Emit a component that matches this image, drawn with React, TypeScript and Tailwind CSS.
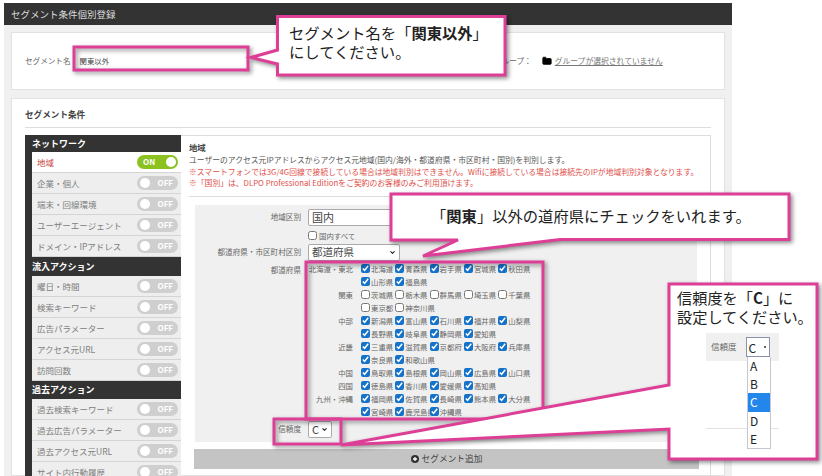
import { ChevronDown, Folder } from "lucide-react";

const PINK = "#dd3f96";

const SIDEBAR = [
  { title: "ネットワーク", h: "h-[17px]", items: ["地域", "企業・個人", "端末・回線環境", "ユーザーエージェント", "ドメイン・IPアドレス"] },
  { title: "流入アクション", h: "h-[19px]", items: ["曜日・時間", "検索キーワード", "広告パラメーター", "アクセス元URL", "訪問回数"] },
  { title: "過去アクション", h: "h-[18px]", items: ["過去検索キーワード", "過去広告パラメーター", "過去アクセス元URL", "サイト内行動履歴"] },
];

const REGIONS = [
  { label: "北海道・東北", on: true, names: ["北海道", "青森県", "岩手県", "宮城県", "秋田県", "山形県", "福島県"] },
  { label: "関東", on: false, names: ["茨城県", "栃木県", "群馬県", "埼玉県", "千葉県", "東京都", "神奈川県"] },
  { label: "中部", on: true, names: ["新潟県", "富山県", "石川県", "福井県", "山梨県", "長野県", "岐阜県", "静岡県", "愛知県"] },
  { label: "近畿", on: true, names: ["三重県", "滋賀県", "京都府", "大阪府", "兵庫県", "奈良県", "和歌山県"] },
  { label: "中国", on: true, names: ["鳥取県", "島根県", "岡山県", "広島県", "山口県"] },
  { label: "四国", on: true, names: ["徳島県", "香川県", "愛媛県", "高知県"] },
  { label: "九州・沖縄", on: true, names: ["福岡県", "佐賀県", "長崎県", "熊本県", "大分県", "宮崎県", "鹿児島県", "沖縄県"] },
];

const Toggle = ({ on }: { on: boolean }) =>
  on ? (
    <div className="flex h-[14px] w-[41px] items-center justify-between rounded-full bg-[#8cc220] pl-[6px] pr-[2px]">
      <span className="text-[8px] font-bold text-white">ON</span>
      <span className="h-[10px] w-[10px] rounded-full bg-white" />
    </div>
  ) : (
    <div className="flex h-[14px] w-[41px] items-center justify-between rounded-full bg-[#cfcfcf] pl-[3px] pr-[5px]">
      <span className="h-[10px] w-[10px] rounded-full bg-white" />
      <span className="text-[8px] font-bold text-white">OFF</span>
    </div>
  );

const Sidebar = () => (
  <div className="w-[156px] shrink-0 bg-[#333] pl-[7px]">
    {SIDEBAR.map((group) => (
      <div key={group.title}>
        <div className={`flex items-center text-[9px] font-bold text-white ${group.h}`}>{group.title}</div>
        {group.items.map((item) => {
          const active = item === "地域";
          return (
            <div
              key={item}
              className={`flex h-[21px] items-center justify-between border-b border-[#d4d4d4] pl-[5px] pr-[3px] text-[8.5px] ${
                active ? "bg-white text-[#c8413b]" : "bg-[#eeeeee] text-[#808080]"
              }`}
            >
              <span>{item}</span>
              <Toggle on={active} />
            </div>
          );
        })}
      </div>
    ))}
  </div>
);

const Prefecture = ({ name, on }: { name: string; on: boolean }) => (
  <label className="flex h-[13px] items-center whitespace-nowrap text-[7.4px] text-[#666]">
    <input type="checkbox" defaultChecked={on} className="mr-[1px] h-[9px] w-[9px] accent-[#1473c9]" />
    {name}
  </label>
);

const FormRow = ({ label, children }: { label: string; children: React.ReactNode }) => (
  <div className="flex">
    <div className="w-[106px] shrink-0 whitespace-nowrap pt-[2px] text-right text-[7.6px] text-[#666]">{label}</div>
    <div className="ml-[7px] flex flex-col">{children}</div>
  </div>
);

const Select = ({ value, width, text }: { value: string; width: string; text: string }) => (
  <div className={`flex h-[17px] items-center justify-between rounded-[2px] border border-[#aaa] bg-white pl-[3px] pr-[3px] text-[#444] ${width} ${text}`}>
    {value}
    <ChevronDown strokeWidth={3.5} className="h-[7px] w-[7px] text-[#222]" />
  </div>
);

const RegionPanel = () => (
  <div className="ml-[14px] h-[237px] w-[502px] bg-[#f0f0f0] pt-[4px]">
    <FormRow label="地域区別">
      <Select value="国内" width="w-[120px]" text="text-[11px]" />
    </FormRow>
    <div className="ml-[113px] mt-[3px] flex h-[13px] items-center text-[7.4px] text-[#666]">
      <input type="checkbox" className="mr-[2px] h-[9px] w-[9px]" />
      国内すべて
    </div>
    <div className="mt-[2px]">
      <FormRow label="都道府県・市区町村区別">
        <Select value="都道府県" width="w-[92px]" text="text-[10.5px]" />
      </FormRow>
    </div>
    <div className="mt-[1px]">
      <FormRow label="都道府県">
        {REGIONS.map((region) => (
          <div key={region.label} className="flex">
            <div className="flex h-[13px] w-[45px] items-center justify-end whitespace-nowrap text-[7.4px] text-[#666]">{region.label}</div>
            <div className="ml-[8px] grid w-[172px] grid-cols-[repeat(5,34.3px)]">
              {region.names.map((name) => (
                <Prefecture key={name} name={name} on={region.on} />
              ))}
            </div>
          </div>
        ))}
      </FormRow>
    </div>
    <div className="mt-[3px]">
      <FormRow label="信頼度">
        <Select value="C" width="w-[24px]" text="text-[11px]" />
      </FormRow>
    </div>
  </div>
);

const Page = () => (
  <div className="ml-[4px] w-[728px] pt-[3px]">
    <div className="flex h-[22px] items-center bg-[#333] pl-[7px] text-[9.5px] text-[#ddd]">セグメント条件個別登録</div>
    <div className="bg-[#f0f0f0] px-[7px] pt-[7px]">
      <div className="flex h-[58px] items-center border border-[#e2e2e2] bg-white pl-[13px] text-[7.6px] text-[#666]">
        <span>セグメント名</span>
        <span className="ml-[9px] text-[7.4px] text-[#444]">関東以外</span>
        <span className="ml-[385px]">グループ：</span>
        <Folder className="ml-[10px] h-[10px] w-[10px] fill-black text-black" />
        <span className="ml-[3px] text-[7.8px] text-[#777] underline">グループが選択されていません</span>
      </div>
      <div className="mt-[8px] h-[378px] border border-[#e2e2e2] bg-white px-[13px]">
        <div className="flex h-[29px] items-end border-b border-[#ddd] pb-[6px] text-[8.6px] font-bold text-[#444]">セグメント条件</div>
        <div className="mt-[7px] flex">
          <Sidebar />
          <div className="min-w-0 flex-1 border-r border-t border-[#ddd]">
            <div className="ml-[8px] mr-[14px] mt-[6px] border-b border-[#ddd] pb-[7px]">
              <div className="text-[8.4px] font-bold leading-[11px] text-[#444]">地域</div>
              <div className="mt-[1px] whitespace-nowrap text-[7.8px] leading-[11.6px]">
                <p className="text-[#555]">ユーザーのアクセス元IPアドレスからアクセス元地域(国内/海外・都道府県・市区町村・国別)を判別します。</p>
                <p className="text-[#e0504a]">※スマートフォンでは3G/4G回線で接続している場合は地域判別はできません。Wifiに接続している場合は接続先のIPが地域判別対象となります。</p>
                <p className="text-[#e0504a]">※「国別」は、DLPO Professional Editionをご契約のお客様のみご利用頂けます。</p>
              </div>
            </div>
            <div className="mt-[8px]">
              <RegionPanel />
            </div>
            <div className="ml-[13px] mt-[7px] flex h-[20px] w-[505px] items-center justify-center bg-[#c4c4c4] text-[8.7px] text-[#444]">
              <svg viewBox="0 0 10 10" className="mr-[3px] h-[8px] w-[8px]">
                <circle cx="5" cy="5" r="5" fill="#333" />
                <path d="M5 2.5v5M2.5 5h5" stroke="#fff" strokeWidth="1.6" />
              </svg>
              セグメント追加
            </div>
          </div>
        </div>
      </div>
    </div>
  </div>
);

const Callouts = () => (
  <>
    <svg viewBox="0 0 822 476" className="absolute left-0 top-0 h-[476px] w-[822px] drop-shadow-[2px_2px_2px_rgba(0,0,0,0.45)]" fill="none" stroke={PINK} strokeWidth="3">
      <rect x="74" y="47" width="174" height="23" />
      <rect x="306" y="262" width="237" height="157" />
      <rect x="274" y="419" width="67" height="25" />
      <path d="M277.5 16.5H505V75H277.5V64L251 57.5L277.5 50Z" fill="#fff" />
      <path d="M391 194H789V239.5H560L423 256L458 240H391Z" fill="#fff" />
      <path d="M669 284H817V459H669V429L341 445L669 385Z" fill="#fff" />
    </svg>
    <div className="absolute left-[289px] top-[23px] whitespace-nowrap text-[15.3px] leading-[19px] text-[#222]">
      <p>
        セグメント名を「<b>関東以外</b>」
      </p>
      <p>にしてください。</p>
    </div>
    <div className="absolute left-[431px] top-[206px] whitespace-nowrap text-[15.3px] leading-[19px] text-[#222]">
      「<b>関東</b>」以外の道府県にチェックをいれます。
    </div>
    <div className="absolute left-[677px] top-[288px] w-[138px] whitespace-nowrap text-[15.2px] leading-[19px] text-[#222]">
      <p>
        信頼度を「<b>C</b>」に
      </p>
      <p>設定してください。</p>
      <div className="ml-[29px] mt-[7px] h-[116px] w-[73px]">
        <div className="flex h-[28px] items-start bg-[#f0f0f0] pl-[5px] pt-[4px]">
          <span className="mt-[3px] text-[8.5px] leading-[12px] text-[#666]">信頼度</span>
          <div className="ml-[9px] flex h-[20px] w-[24px] items-center justify-between border border-[#8a93a8] bg-white pl-[2px] pr-[3px] text-[12px]">
            C<span className="h-[2px] w-[2px] rounded-full bg-[#333]" />
          </div>
        </div>
        <div className="relative h-[68px] border-b border-[#e2e2e2]">
          <div className="absolute left-[41px] top-[-4px] w-[24px] border border-t-0 border-[#c4c8d2] bg-white text-[12px] leading-[18.2px] text-[#222]">
            <div className="pl-[2px]">A</div>
            <div className="pl-[2px]">B</div>
            <div className="bg-[#2286ea] pl-[2px] text-white">C</div>
            <div className="pl-[2px]">D</div>
            <div className="pl-[2px]">E</div>
          </div>
        </div>
      </div>
    </div>
  </>
);

export default function App() {
  return (
    <div className="relative h-[476px] w-[822px] overflow-hidden bg-white font-['Noto_Sans_CJK_JP',sans-serif]">
      <Page />
      <Callouts />
    </div>
  );
}
